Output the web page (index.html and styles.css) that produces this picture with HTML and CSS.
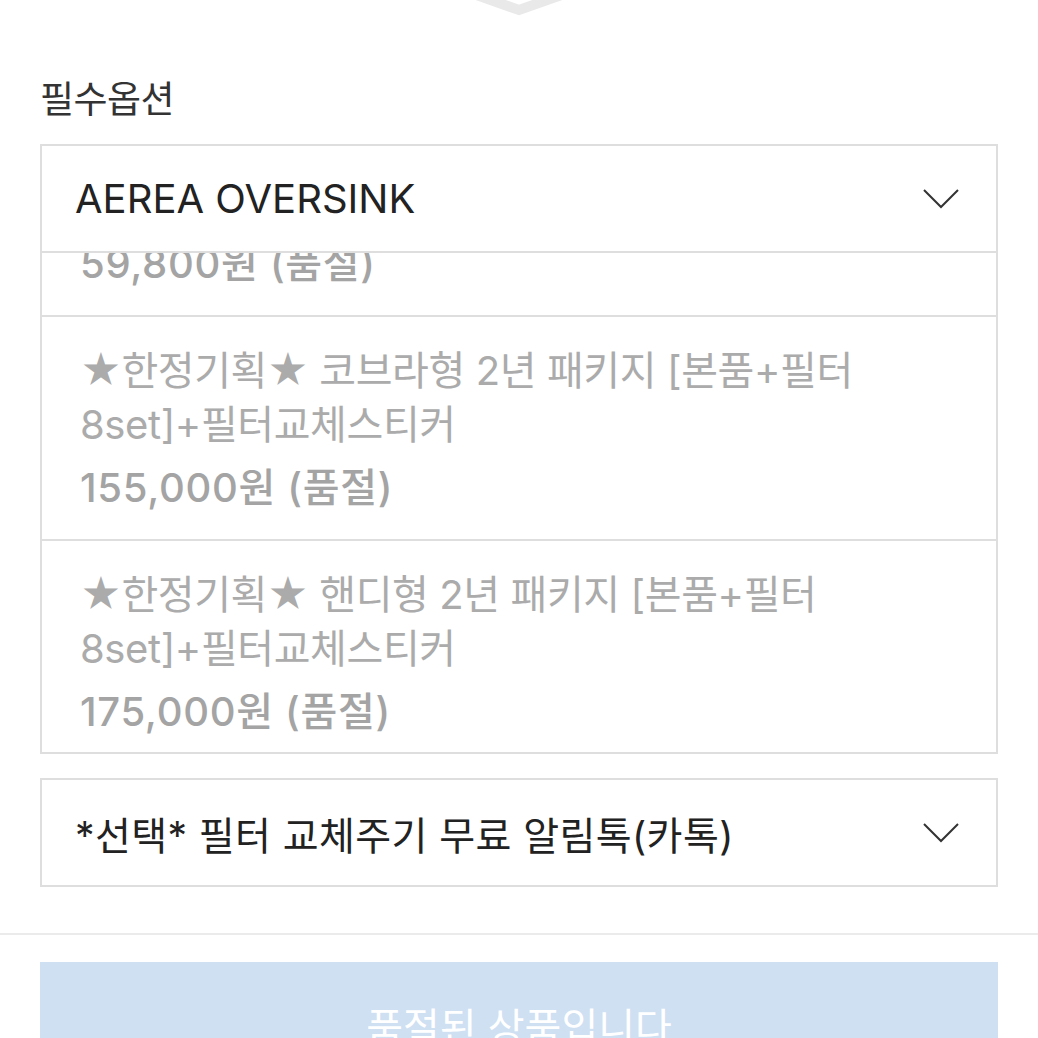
FILE: index.html
```html
<!DOCTYPE html>
<html lang="ko">
<head>
    <meta charset="utf-8">
    <meta name="viewport" content="width=device-width, initial-scale=1.0">
    <title>필수옵션</title>
    <link rel="stylesheet" href="styles.css">
</head>
<body>
    <div class="top-mark">
        <svg width="110" height="18" viewBox="0 0 110 18">
            <polyline points="4,-8 55,10 106,-8" fill="none" stroke="#e9e9e9" stroke-width="10" stroke-linejoin="miter"/>
        </svg>
    </div>
    <div class="options">
        <div class="label">필수옵션</div>
        <div class="select">
            <span>AEREA OVERSINK</span>
            <svg class="chev" width="38" height="24" viewBox="0 0 38 24"><polyline points="2,3 19,20 36,3" fill="none" stroke="#333" stroke-width="2"/></svg>
        </div>
        <div class="list">
            <div class="item first">
                <div class="price">59,800원 (품절)</div>
            </div>
            <div class="item">
                <div class="name">★한정기획★ 코브라형 2년 패키지 [본품+필터 8set]+필터교체스티커</div>
                <div class="price">155,000원 (품절)</div>
            </div>
            <div class="item">
                <div class="name">★한정기획★ 핸디형 2년 패키지 [본품+필터 8set]+필터교체스티커</div>
                <div class="price">175,000원 (품절)</div>
            </div>
        </div>
        <div class="select second">
            <span>*선택* 필터 교체주기 무료 알림톡(카톡)</span>
            <svg class="chev" width="38" height="24" viewBox="0 0 38 24"><polyline points="2,3 19,20 36,3" fill="none" stroke="#333" stroke-width="2"/></svg>
        </div>
    </div>
    <div class="divider"></div>
    <div class="actions">
        <button class="soldout">품절된 상품입니다</button>
    </div>
</body>
</html>
```

FILE: styles.css
```css
body {
    margin: 0;
    padding: 0;
    background: #fff;
    font-family: "Inter", "Noto Sans CJK KR", sans-serif;
    height: 1038px;
    overflow: hidden;
}
.top-mark {
    height: 20px;
    display: flex;
    justify-content: center;
}
.options {
    padding: 0 40px 0 40px;
}
.label {
    margin-top: 54px;
    font-family: "Noto Sans CJK KR", sans-serif;
    font-size: 37px;
    line-height: 46px;
    letter-spacing: -0.5px;
    color: #333;
}
.select {
    margin-top: 24px;
    height: 105px;
    border: 2px solid #dedede;
    display: flex;
    align-items: center;
    justify-content: space-between;
    padding: 0 36px 0 33px;
    font-size: 40px;
    color: #222;
}
.select span {
    letter-spacing: 0;
}
.select.second {
    margin-top: 24px;
}
.select.second span {
    font-size: 39px;
    letter-spacing: 0.4px;
}
.chev {
    display: block;
}
.list {
    height: 499px;
    border: 2px solid #dedede;
    border-top: none;
    overflow: hidden;
}
.item {
    border-bottom: 2px solid #dedede;
    padding: 27px 38px 24px 38px;
    color: #ababab;
    font-size: 40px;
}
.item.first {
    margin-top: -52px;
}
.item .name {
    line-height: 54px;
    letter-spacing: -0.4px;
    word-break: keep-all;
}
.item .price {
    margin-top: 9px;
    line-height: 54px;
    font-size: 40px;
    font-weight: 500;
    color: #a4a4a4;
    letter-spacing: 0.7px;
}
.divider {
    margin-top: 46px;
    height: 2px;
    background: #ebebeb;
}
.actions {
    padding: 27px 40px 0 40px;
}
.soldout {
    width: 100%;
    height: 126px;
    border: none;
    background: #cfe0f3;
    color: #fff;
    font-family: "Noto Sans CJK KR", sans-serif;
    font-size: 40px;
    padding: 0;
}
```
